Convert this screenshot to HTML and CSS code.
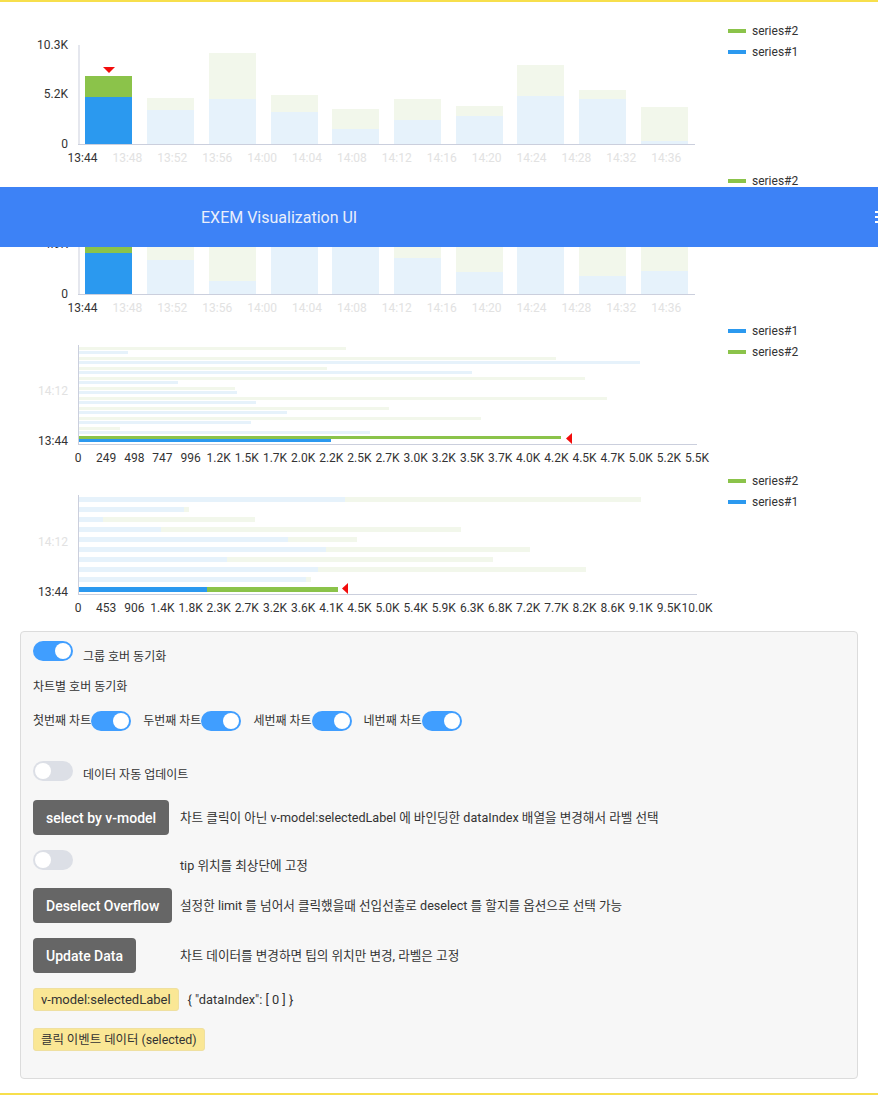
FILE: index.html
```html
<!DOCTYPE html>
<html lang="ko">
<head>
<meta charset="utf-8">
<title>EXEM Visualization UI</title>
<link rel="stylesheet" href="styles.css">
</head>
<body>
<div class="frame">
  <section class="charts">
    <!-- chart 1 -->
    <div class="chart">
      <svg class="plot" width="728" height="150" viewBox="0 0 728 150">
        <g class="bars">
          <rect class="b1" x="85" y="77" width="47" height="47"/><rect class="g1" x="85" y="56" width="47" height="21"/>
          <rect class="b0" x="147" y="90" width="47" height="34"/><rect class="g0" x="147" y="78" width="47" height="12"/>
          <rect class="b0" x="209" y="79" width="47" height="45"/><rect class="g0" x="209" y="33" width="47" height="46"/>
          <rect class="b0" x="271" y="92" width="47" height="32"/><rect class="g0" x="271" y="75" width="47" height="17"/>
          <rect class="b0" x="332" y="109" width="47" height="15"/><rect class="g0" x="332" y="89" width="47" height="20"/>
          <rect class="b0" x="394" y="100" width="47" height="24"/><rect class="g0" x="394" y="79" width="47" height="21"/>
          <rect class="b0" x="456" y="96" width="47" height="28"/><rect class="g0" x="456" y="86" width="47" height="10"/>
          <rect class="b0" x="517" y="76" width="47" height="48"/><rect class="g0" x="517" y="45" width="47" height="31"/>
          <rect class="b0" x="579" y="79" width="47" height="45"/><rect class="g0" x="579" y="70" width="47" height="9"/>
          <rect class="b0" x="641" y="121" width="47" height="3"/><rect class="g0" x="641" y="87" width="47" height="34"/>
        </g>
        <polygon class="mark" points="103,47 115,47 109,53"/>
        <line class="axis" x1="79" y1="25" x2="79" y2="124.5"/>
        <line class="axis" x1="78" y1="124.5" x2="695" y2="124.5"/>
        <g class="ax">
          <text x="68" y="28.5" text-anchor="end">10.3K</text>
          <text x="68" y="78" text-anchor="end">5.2K</text>
          <text x="68" y="127.5" text-anchor="end">0</text>
        </g>
        <g class="ax" text-anchor="middle">
          <text x="82.5" y="142">13:44</text>
          <text class="dim" x="127.4" y="142">13:48</text>
          <text class="dim" x="172.3" y="142">13:52</text>
          <text class="dim" x="217.2" y="142">13:56</text>
          <text class="dim" x="262.1" y="142">14:00</text>
          <text class="dim" x="307" y="142">14:04</text>
          <text class="dim" x="351.9" y="142">14:08</text>
          <text class="dim" x="396.8" y="142">14:12</text>
          <text class="dim" x="441.7" y="142">14:16</text>
          <text class="dim" x="486.6" y="142">14:20</text>
          <text class="dim" x="531.5" y="142">14:24</text>
          <text class="dim" x="576.4" y="142">14:28</text>
          <text class="dim" x="621.3" y="142">14:32</text>
          <text class="dim" x="666.2" y="142">14:36</text>
        </g>
      </svg>
      <ul class="legend">
        <li><span class="swatch green"></span>series#2</li>
        <li><span class="swatch blue"></span>series#1</li>
      </ul>
    </div>

    <!-- chart 2 -->
    <div class="chart">
      <svg class="plot" width="728" height="150" viewBox="0 0 728 150">
        <g class="bars">
          <rect class="b1" x="85" y="83" width="47" height="41"/><rect class="g1" x="85" y="50" width="47" height="33"/>
          <rect class="b0" x="147" y="90" width="47" height="34"/><rect class="g0" x="147" y="60" width="47" height="30"/>
          <rect class="b0" x="209" y="111" width="47" height="13"/><rect class="g0" x="209" y="40" width="47" height="71"/>
          <rect class="b0" x="271" y="60" width="47" height="64"/><rect class="g0" x="271" y="30" width="47" height="30"/>
          <rect class="b0" x="332" y="55" width="47" height="69"/><rect class="g0" x="332" y="35" width="47" height="20"/>
          <rect class="b0" x="394" y="88" width="47" height="36"/><rect class="g0" x="394" y="45" width="47" height="43"/>
          <rect class="b0" x="456" y="102" width="47" height="22"/><rect class="g0" x="456" y="55" width="47" height="47"/>
          <rect class="b0" x="517" y="65" width="47" height="59"/><rect class="g0" x="517" y="40" width="47" height="25"/>
          <rect class="b0" x="579" y="106" width="47" height="18"/><rect class="g0" x="579" y="50" width="47" height="56"/>
          <rect class="b0" x="641" y="101" width="47" height="23"/><rect class="g0" x="641" y="60" width="47" height="41"/>
        </g>
        <polygon class="mark" points="103,41 115,41 109,47"/>
        <line class="axis" x1="79" y1="25" x2="79" y2="124.5"/>
        <line class="axis" x1="78" y1="124.5" x2="695" y2="124.5"/>
        <g class="ax">
          <text x="68" y="28.5" text-anchor="end">9.8K</text>
          <text x="68" y="78" text-anchor="end">4.9K</text>
          <text x="68" y="127.5" text-anchor="end">0</text>
        </g>
        <g class="ax" text-anchor="middle">
          <text x="82.5" y="142">13:44</text>
          <text class="dim" x="127.4" y="142">13:48</text>
          <text class="dim" x="172.3" y="142">13:52</text>
          <text class="dim" x="217.2" y="142">13:56</text>
          <text class="dim" x="262.1" y="142">14:00</text>
          <text class="dim" x="307" y="142">14:04</text>
          <text class="dim" x="351.9" y="142">14:08</text>
          <text class="dim" x="396.8" y="142">14:12</text>
          <text class="dim" x="441.7" y="142">14:16</text>
          <text class="dim" x="486.6" y="142">14:20</text>
          <text class="dim" x="531.5" y="142">14:24</text>
          <text class="dim" x="576.4" y="142">14:28</text>
          <text class="dim" x="621.3" y="142">14:32</text>
          <text class="dim" x="666.2" y="142">14:36</text>
        </g>
      </svg>
      <ul class="legend">
        <li><span class="swatch green"></span>series#2</li>
        <li><span class="swatch blue"></span>series#1</li>
      </ul>
    </div>

    <!-- chart 3 -->
    <div class="chart">
      <svg class="plot" width="728" height="150" viewBox="0 0 728 150">
        <g class="bars">
          <rect class="g0" x="79" y="27" width="267" height="3"/><rect class="b0" x="79" y="31" width="49" height="3"/>
          <rect class="g0" x="79" y="37" width="477" height="3"/><rect class="b0" x="79" y="41" width="561" height="3"/>
          <rect class="g0" x="79" y="47" width="248" height="3"/><rect class="b0" x="79" y="51" width="393" height="3"/>
          <rect class="g0" x="79" y="57" width="506" height="3"/><rect class="b0" x="79" y="61" width="99" height="3"/>
          <rect class="g0" x="79" y="67" width="156" height="3"/><rect class="b0" x="79" y="71" width="158" height="3"/>
          <rect class="g0" x="79" y="77" width="528" height="3"/><rect class="b0" x="79" y="81" width="177" height="3"/>
          <rect class="g0" x="79" y="87" width="310" height="3"/><rect class="b0" x="79" y="91" width="208" height="3"/>
          <rect class="g0" x="79" y="97" width="402" height="3"/><rect class="b0" x="79" y="101" width="172" height="3"/>
          <rect class="g0" x="79" y="107" width="41" height="3"/><rect class="b0" x="79" y="111" width="291" height="3"/>
          <rect class="g1" x="79" y="116" width="482" height="3"/><rect class="b1" x="79" y="119" width="252" height="3"/>
        </g>
        <polygon class="mark" points="572,113 572,124 566,118.5"/>
        <line class="axis" x1="78.5" y1="25" x2="78.5" y2="124.5"/>
        <line class="axis" x1="78" y1="124.5" x2="697" y2="124.5"/>
        <g class="ax" text-anchor="end">
          <text class="dim" x="68" y="74.5">14:12</text>
          <text x="68" y="124.5">13:44</text>
        </g>
        <g class="ax" text-anchor="middle">
          <text x="78" y="142">0</text>
          <text x="106.1" y="142">249</text>
          <text x="134.3" y="142">498</text>
          <text x="162.4" y="142">747</text>
          <text x="190.6" y="142">996</text>
          <text x="218.7" y="142">1.2K</text>
          <text x="246.8" y="142">1.5K</text>
          <text x="275" y="142">1.7K</text>
          <text x="303.1" y="142">2.0K</text>
          <text x="331.3" y="142">2.2K</text>
          <text x="359.4" y="142">2.5K</text>
          <text x="387.5" y="142">2.7K</text>
          <text x="415.7" y="142">3.0K</text>
          <text x="443.8" y="142">3.2K</text>
          <text x="472" y="142">3.5K</text>
          <text x="500.1" y="142">3.7K</text>
          <text x="528.2" y="142">4.0K</text>
          <text x="556.4" y="142">4.2K</text>
          <text x="584.5" y="142">4.5K</text>
          <text x="612.7" y="142">4.7K</text>
          <text x="640.8" y="142">5.0K</text>
          <text x="668.9" y="142">5.2K</text>
          <text x="697" y="142">5.5K</text>
        </g>
      </svg>
      <ul class="legend">
        <li><span class="swatch blue"></span>series#1</li>
        <li><span class="swatch green"></span>series#2</li>
      </ul>
    </div>

    <!-- chart 4 -->
    <div class="chart">
      <svg class="plot" width="728" height="150" viewBox="0 0 728 150">
        <g class="bars">
          <rect class="b0" x="79" y="27" width="266" height="5"/><rect class="g0" x="345" y="27" width="296" height="5"/>
          <rect class="b0" x="79" y="37" width="105" height="5"/><rect class="g0" x="184" y="37" width="5" height="5"/>
          <rect class="b0" x="79" y="47" width="24" height="5"/><rect class="g0" x="103" y="47" width="152" height="5"/>
          <rect class="b0" x="79" y="57" width="82" height="5"/><rect class="g0" x="161" y="57" width="300" height="5"/>
          <rect class="b0" x="79" y="67" width="209" height="5"/><rect class="g0" x="288" y="67" width="69" height="5"/>
          <rect class="b0" x="79" y="77" width="247" height="5"/><rect class="g0" x="326" y="77" width="204" height="5"/>
          <rect class="b0" x="79" y="87" width="148" height="5"/><rect class="g0" x="227" y="87" width="266" height="5"/>
          <rect class="b0" x="79" y="97" width="239" height="5"/><rect class="g0" x="318" y="97" width="268" height="5"/>
          <rect class="b0" x="79" y="107" width="227" height="5"/><rect class="g0" x="306" y="107" width="5" height="5"/>
          <rect class="b1" x="79" y="117" width="128" height="5"/><rect class="g1" x="207" y="117" width="131" height="5"/>
        </g>
        <polygon class="mark" points="348,113 348,124 342,118.5"/>
        <line class="axis" x1="78.5" y1="25" x2="78.5" y2="124.5"/>
        <line class="axis" x1="78" y1="124.5" x2="697" y2="124.5"/>
        <g class="ax" text-anchor="end">
          <text class="dim" x="68" y="75.5">14:12</text>
          <text x="68" y="125.5">13:44</text>
        </g>
        <g class="ax" text-anchor="middle">
          <text x="78" y="142">0</text>
          <text x="106.1" y="142">453</text>
          <text x="134.3" y="142">906</text>
          <text x="162.4" y="142">1.4K</text>
          <text x="190.6" y="142">1.8K</text>
          <text x="218.7" y="142">2.3K</text>
          <text x="246.8" y="142">2.7K</text>
          <text x="275" y="142">3.2K</text>
          <text x="303.1" y="142">3.6K</text>
          <text x="331.3" y="142">4.1K</text>
          <text x="359.4" y="142">4.5K</text>
          <text x="387.5" y="142">5.0K</text>
          <text x="415.7" y="142">5.4K</text>
          <text x="443.8" y="142">5.9K</text>
          <text x="472" y="142">6.3K</text>
          <text x="500.1" y="142">6.8K</text>
          <text x="528.2" y="142">7.2K</text>
          <text x="556.4" y="142">7.7K</text>
          <text x="584.5" y="142">8.2K</text>
          <text x="612.7" y="142">8.6K</text>
          <text x="640.8" y="142">9.1K</text>
          <text x="668.9" y="142">9.5K</text>
          <text x="697" y="142">10.0K</text>
        </g>
      </svg>
      <ul class="legend">
        <li><span class="swatch green"></span>series#2</li>
        <li><span class="swatch blue"></span>series#1</li>
      </ul>
    </div>
  </section>

  <section class="panel">
    <div class="row sw-row">
      <span class="switch on"></span>
      <span class="sw-label">그룹 호버 동기화</span>
    </div>
    <div class="row title">차트별 호버 동기화</div>
    <div class="row per-chart">
      <span class="pc-item"><span class="pc-label">첫번째 차트</span><span class="switch on"></span></span>
      <span class="pc-item"><span class="pc-label">두번째 차트</span><span class="switch on"></span></span>
      <span class="pc-item"><span class="pc-label">세번째 차트</span><span class="switch on"></span></span>
      <span class="pc-item"><span class="pc-label">네번째 차트</span><span class="switch on"></span></span>
    </div>
    <div class="row sw-row auto">
      <span class="switch"></span>
      <span class="sw-label tight">데이터 자동 업데이트</span>
    </div>
    <div class="row opt r-select">
      <span class="cell"><button class="btn">select by v-model</button></span>
      <span class="desc">차트 클릭이 아닌 v-model:selectedLabel 에 바인딩한 dataIndex 배열을 변경해서 라벨 선택</span>
    </div>
    <div class="row opt top r-tip">
      <span class="cell"><span class="switch"></span></span>
      <span class="desc tip">tip 위치를 최상단에 고정</span>
    </div>
    <div class="row opt r-deselect">
      <span class="cell"><button class="btn">Deselect Overflow</button></span>
      <span class="desc">설정한 limit 를 넘어서 클릭했을때 선입선출로 deselect 를 할지를 옵션으로 선택 가능</span>
    </div>
    <div class="row opt r-update">
      <span class="cell"><button class="btn">Update Data</button></span>
      <span class="desc">차트 데이터를 변경하면 팁의 위치만 변경, 라벨은 고정</span>
    </div>
    <div class="row tag-row r-model">
      <span class="tag">v-model:selectedLabel</span>
      <span class="value">{ "dataIndex": [ 0 ] }</span>
    </div>
    <div class="row tag-row r-click">
      <span class="tag tag-ko">클릭 이벤트 데이터 (selected)</span>
    </div>
  </section>
</div>

<header class="appbar">
  <span class="appbar-title">EXEM Visualization UI</span>
  <svg class="appbar-icon" width="18" height="18" viewBox="0 0 18 18"><path d="M2 4h14M2 9h14M2 14h14" stroke="#fff" stroke-width="2"/></svg>
</header>
</body>
</html>
```

FILE: styles.css
```css
* { box-sizing: border-box; }

html, body {
  margin: 0;
  padding: 0;
  background: #fff;
}

body {
  font-family: Roboto, "Noto Sans CJK KR", sans-serif;
  color: #333;
  overflow: hidden;
}

.frame {
  border-top: 2px solid #f7df4c;
  border-bottom: 2px solid #f7df4c;
  padding: 18px 0 14px;
}

.charts {
  display: flex;
  flex-direction: column;
}

.chart {
  display: flex;
  height: 150px;
}

.plot {
  display: block;
  flex: none;
}

.bars .b1 { fill: #2b99ef; }
.bars .g1 { fill: #8bc34a; }
.bars .b0 { fill: #e6f2fb; }
.bars .g0 { fill: #f2f7eb; }

.mark { fill: #f20c0c; }

.axis {
  stroke: #cbcfdd;
  stroke-width: 1;
}

.ax text {
  font-family: Roboto, sans-serif;
  font-size: 12px;
  fill: #333;
}

.ax text.dim { fill: #e2e2e2; }

.legend {
  list-style: none;
  margin: 0;
  padding: 0;
  display: flex;
  flex-direction: column;
  gap: 7px;
  font-size: 12px;
  color: #333;
}

.legend li {
  display: flex;
  align-items: center;
  height: 14px;
  line-height: 14px;
}

.legend li:first-child { margin-top: 4px; }

.swatch {
  width: 18px;
  height: 4px;
  margin-right: 6px;
}

.swatch.green { background: #8bc34a; }
.swatch.blue { background: #2b99ef; }

/* panel */
.panel {
  margin: 11px 20px 0;
  background: #f7f7f7;
  border: 1px solid #dcdcdc;
  border-radius: 4px;
  padding: 9px 12px 27px;
  font-size: 12px;
  line-height: 20px;
}

.row { display: flex; }

.switch {
  position: relative;
  flex: none;
  width: 40px;
  height: 20px;
  border-radius: 10px;
  background: #dcdfe6;
}

.switch::after {
  content: "";
  position: absolute;
  top: 2px;
  left: 2px;
  width: 16px;
  height: 16px;
  border-radius: 50%;
  background: #fff;
}

.switch.on { background: #409eff; }
.switch.on::after { left: 22px; }

.sw-row { align-items: flex-start; }

.sw-label {
  margin-left: 10px;
  padding-top: 6px;
}

.sw-label.tight { padding-top: 4px; }

.title { margin-top: 10px; }

.per-chart {
  margin-top: 14px;
  align-items: center;
  gap: 12px;
}

.pc-item {
  display: flex;
  align-items: center;
}

.auto { margin-top: 30px; }

.opt {
  display: grid;
  grid-template-columns: 147px 1fr;
  align-items: center;
}

.opt.top { align-items: start; }

.cell { display: flex; }

.desc { font-size: 12.6px; }

.desc.tip { padding-top: 6px; }

.r-select { margin-top: 15px; }
.r-tip { margin-top: 15px; }
.r-deselect { margin-top: 12px; }
.r-update { margin-top: 15px; }
.r-model { margin-top: 15px; }
.r-click { margin-top: 17px; }

.btn {
  height: 35px;
  padding: 0 13px;
  border: none;
  border-radius: 4px;
  background: #666;
  color: #fff;
  font-family: Roboto, "Noto Sans CJK KR", sans-serif;
  font-size: 14px;
  font-weight: 500;
}

.tag-row {
  align-items: center;
}

.tag {
  display: inline-flex;
  align-items: center;
  height: 23px;
  padding: 0 7px;
  background: #fae795;
  border: 1px solid #efe0a0;
  border-radius: 3px;
  font-size: 13px;
  color: #333;
}

.tag.tag-ko { font-size: 12.4px; }

.value {
  margin-left: 9px;
  font-size: 12.8px;
}

/* fixed app bar overlaying the charts */
.appbar {
  position: fixed;
  top: 187px;
  left: 0;
  right: 0;
  height: 60px;
  background: #3d82f6;
  display: flex;
  align-items: center;
}

.appbar-title {
  margin-left: 201px;
  font-size: 16px;
  color: #e9eefb;
}

.appbar-icon {
  position: absolute;
  left: 873px;
  top: 21px;
}
```
